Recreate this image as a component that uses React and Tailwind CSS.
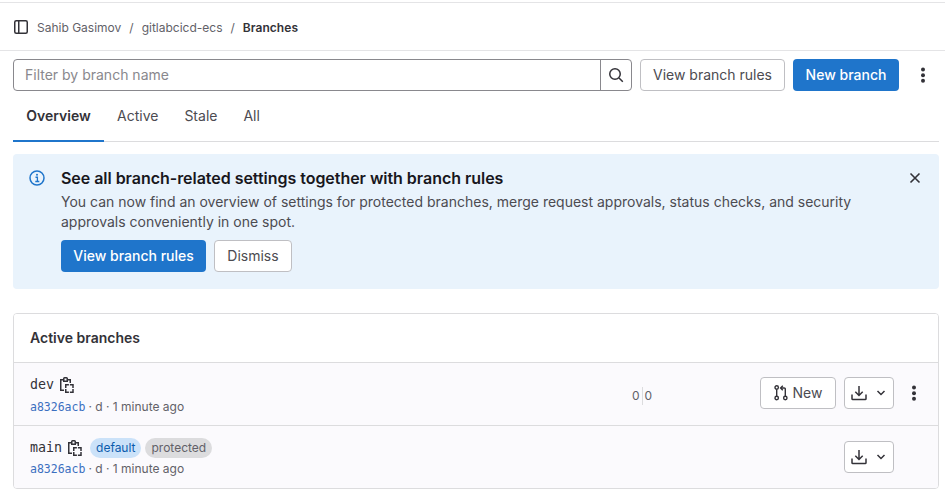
import React from "react";

const Clip = () => (
  <svg width="14" height="16" viewBox="0 0 14 16" fill="none" stroke="#333238" strokeWidth="1.500" className="shrink-0">
    <path d="M3.500 2.750H.75v10.500H4" />
    <path d="M3.750 4.250V1.500c0-.5.250-.75.750-.75h2c.5 0 .75.250.750.75v2.750z" />
    <path d="M7.500 2.750h2.750V6" />
    <path d="M5.750 11V7.750H8.900M9.900 7.750H13V11M13 12v3.250H9.900M8.900 15.250H5.750V12" />
  </svg>
);

const Dots = ({ className = "" }) => (
  <svg width="4" height="16" viewBox="0 0 4 16" fill="#333238" className={className}>
    <circle cx="2" cy="2.600" r="2" />
    <circle cx="2" cy="8.200" r="2" />
    <circle cx="2" cy="13.800" r="2" />
  </svg>
);

const Download = () => (
  <div className="flex h-8 w-[50px] items-center justify-center gap-[9px] rounded border border-[#bfbfc3] bg-white pr-px">
    <svg width="16" height="16" viewBox="0 0 16 16" fill="none" stroke="#333238" strokeWidth="1.500">
      <path d="M8 1v9.200M4.300 6.800 8 10.500l3.700-3.700" />
      <path d="M1 9.500v4.200c0 .5.3.8.8.8h12.400c.5 0 .8-.3.8-.8V9.500" />
    </svg>
    <svg width="10" height="6" viewBox="0 0 10 6" fill="none" stroke="#333238" strokeWidth="1.500">
      <path d="m1.500 1 3.500 3.500L8.500 1" />
    </svg>
  </div>
);

const Meta = () => (
  <div className="flex h-[18px] items-center text-xs leading-[18px] text-[#626168]">
    <span className="font-['DejaVu_Sans_Mono','Liberation_Mono',monospace] text-[11.500px] text-[#3b6fc0]">a8326acb</span>
    <span className="ml-[3px]">· d · 1 minute ago</span>
  </div>
);

export default function App() {
  return (
    <div className="h-[501px] w-[945px] overflow-hidden bg-white pt-[2px] font-['Inter',sans-serif] text-sm text-[#333238]">
      <header className="flex h-[49px] items-center border-y border-[#e4e4e6] pl-[14px]">
        <svg width="14" height="14" viewBox="0 0 14 14" fill="none" stroke="#333238" strokeWidth="1.500" className="mr-[9px]">
          <rect x="0.750" y="0.750" width="12.500" height="12.500" rx="1.500" />
          <path d="M4.750 1v12" />
        </svg>
        <nav className="flex items-center pt-[2px] text-xs text-[#626168]">
          <span>Sahib Gasimov</span>
          <span className="mx-[8px]">/</span>
          <span>gitlabcicd-ecs</span>
          <span className="mx-[8px]">/</span>
          <span className="font-semibold tracking-[0.050px] text-[#333238]">Branches</span>
        </nav>
      </header>

      <div className="mx-[13px] mt-2 flex h-8 items-center">
        <div className="flex h-8 w-[619px] rounded border border-[#89888d]">
          <div className="flex flex-1 items-center pl-[11px] text-[#89888d]">Filter by branch name</div>
          <div className="flex w-[31px] items-center justify-center border-l border-[#89888d]">
            <svg width="16" height="16" viewBox="0 0 16 16" fill="none" stroke="#333238" strokeWidth="1.500">
              <circle cx="7" cy="7" r="5.250" />
              <path d="m11 11 3.800 3.800" />
            </svg>
          </div>
        </div>
        <div className="ml-2 flex h-8 w-[145px] items-center justify-center rounded border border-[#bfbfc3] text-[#4c4b51]">View branch rules</div>
        <div className="ml-2 flex h-8 w-[106px] items-center justify-center rounded bg-[#1f75cb] font-medium text-white">New branch</div>
        <Dots className="ml-[22px]" />
      </div>

      <div className="mx-[13px] flex h-[51px] w-[926px] items-stretch border-b border-[#dcdcde]">
        <div className="-mb-px flex w-[91px] items-center justify-center border-b-2 border-[#1f75cb] font-semibold text-[#333238]">Overview</div>
        <div className="ml-[13px] flex items-center text-[#4c4b51]">Active</div>
        <div className="ml-[26px] flex items-center text-[#4c4b51]">Stale</div>
        <div className="ml-[26px] flex items-center text-[#4c4b51]">All</div>
      </div>

      <section className="relative mx-[13px] mt-3 h-[135px] w-[926px] rounded bg-[#e9f3fc] pl-12 pt-[14px]">
        <svg width="16" height="16" viewBox="0 0 16 16" fill="none" className="absolute left-4 top-4">
          <circle cx="8" cy="8" r="7" stroke="#1f75cb" strokeWidth="1.500" />
          <circle cx="8" cy="4.700" r="1" fill="#1f75cb" />
          <path d="M6.500 7.250H8.400V11.300M6.300 11.500h4" stroke="#1f75cb" strokeWidth="1.300" />
        </svg>
        <svg width="12" height="12" viewBox="0 0 12 12" fill="none" stroke="#333238" strokeWidth="1.600" className="absolute right-[18px] top-[18px]">
          <path d="m1.500 1.500 9 9M10.500 1.500l-9 9" />
        </svg>
        <h2 className="text-base leading-5 font-semibold tracking-[-0.035px] text-[#18171d]">See all branch-related settings together with branch rules</h2>
        <p className="mt-[4px] w-[830px] leading-5 text-[#4c4b51]">
          You can now find an overview of settings for protected branches, merge request approvals, status checks, and security approvals conveniently in one spot.
        </p>
        <div className="mt-2 flex gap-2">
          <div className="flex h-8 w-[145px] items-center justify-center rounded bg-[#1f75cb] font-medium text-white">View branch rules</div>
          <div className="flex h-8 w-[78px] items-center justify-center rounded border border-[#bfbfc3] bg-white text-[#4c4b51]">Dismiss</div>
        </div>
      </section>

      <section className="mx-[13px] mt-6 w-[926px] overflow-hidden rounded border border-[#dcdcde]">
        <div className="flex h-[49px] items-center border-b border-[#dcdcde] bg-white pl-4 font-semibold text-[#333238]">Active branches</div>
        <div className="flex h-[63px] items-center border-b border-[#dcdcde] bg-[#fbfafd] pl-4">
          <div className="w-[601px] pt-[4px]">
            <div className="flex h-[17px] translate-y-px items-center gap-[6px] font-['DejaVu_Sans_Mono','Liberation_Mono',monospace] text-[13.300px] text-[#333238]">
              dev <span className="-mt-[1px]"><Clip /></span>
            </div>
            <div className="mt-[5px]"><Meta /></div>
          </div>
          <div className="flex h-[18px] w-[129px] items-center pt-[4px] pl-px text-xs">
            <span className="text-[#626168]">0</span>
            <span className="mx-[2px] h-[18px] w-px bg-[#dcdcde]" />
            <span className="text-[#626168]">0</span>
          </div>
          <div className="mb-[2px] flex h-8 w-[76px] items-center justify-center gap-[5px] rounded border border-[#bfbfc3] bg-white text-[#4c4b51]">
            <svg width="14" height="16" viewBox="0 0 14 16" fill="none" stroke="#333238" strokeWidth="1.400">
              <circle cx="2.700" cy="2.500" r="1.700" />
              <circle cx="2.700" cy="13" r="1.700" />
              <circle cx="11.300" cy="13" r="1.700" />
              <path d="M2.700 4.500v6.500M11.300 11V4.200c0-.7-.4-1.200-1.200-1.200H7" />
              <path d="M8.800 .8 6.600 3l2.200 2.200" />
            </svg>
            New
          </div>
          <div className="mb-[2px] ml-2">
            <Download />
          </div>
          <Dots className="mb-[2px] ml-[18px]" />
        </div>
        <div className="flex h-[62px] items-center bg-[#fbfafd] pl-4">
          <div className="w-[814px] pt-[2px]">
            <div className="flex h-[20px] items-center font-['DejaVu_Sans_Mono','Liberation_Mono',monospace] text-[13.300px] text-[#333238]">
              main
              <span className="ml-[6px]"><Clip /></span>
              <span className="ml-[8px] flex h-5 items-center rounded-full bg-[#cbe2f9] px-[6px] font-['Inter',sans-serif] text-xs text-[#0b5cad]">default</span>
              <span className="ml-1 flex h-5 items-center rounded-full bg-[#dcdcde] px-[6px] font-['Inter',sans-serif] text-xs text-[#626168]">protected</span>
            </div>
            <div className="mt-[2px]"><Meta /></div>
          </div>
          <Download />
        </div>
      </section>
    </div>
  );
}
